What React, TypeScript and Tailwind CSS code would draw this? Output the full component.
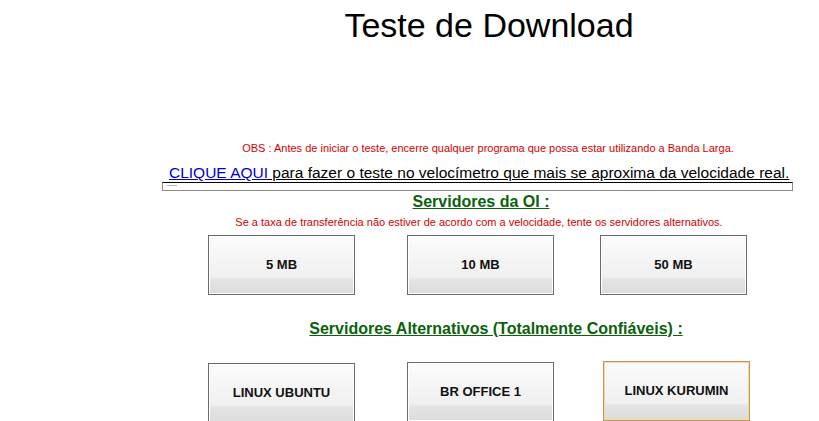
const Botao = ({ label, ativo }: { label: string; ativo?: boolean }) => (
  <button
    className={
      'relative flex h-[60px] w-[147px] items-center justify-center border bg-[linear-gradient(#fbfbfb,#f0f0f0_70%,#e3e3e3_76%,#dcdcdc)] text-[13px] font-bold text-[#111] ' +
      (ativo
        ? 'border-[#c8954f] shadow-[inset_0_0_0_1px_#f3d9a9]'
        : 'border-[#6b6b6b] shadow-[inset_0_0_0_1px_#ffffff]')
    }
  >
    {label}
  </button>
);

export default function App() {
  return (
    <div className="h-[421px] w-[819px] overflow-hidden bg-white font-['Liberation_Sans',Arial,sans-serif] text-black">
      <h1 className="pt-[6px] pl-[159px] text-center text-[34px] leading-[38px]">Teste de Download</h1>

      <div className="ml-[162px] mt-[98px] flex w-[631px] flex-col">
        <p className="pl-[21px] text-center text-[11px] leading-[13px] text-[#d40000]">
          OBS : Antes de iniciar o teste, encerre qualquer programa que possa estar utilizando a Banda Larga.
        </p>
        <p className="mt-[9px] whitespace-nowrap pl-[7px] text-[15.5px] leading-[18px] underline">
          <a className="text-[#0000cc]" href="#">CLIQUE AQUI</a> para fazer o teste no velocímetro que mais se aproxima da velocidade real.
        </p>
        <div className="h-[9px] w-[631px] border border-t-black border-[#8c8c8c] pl-[4px] pt-[2px]">
          <div className="h-px w-[10px] bg-[#b5b5b5]" />
        </div>

        <h2 className="mt-[1px] pl-[7px] text-center text-[16px] font-bold leading-[19px] text-[#0a620a] underline">
          Servidores da OI :
        </h2>
        <p className="mt-[5px] pl-[3px] text-center text-[11px] leading-[13px] text-[#d40000]">
          Se a taxa de transferência não estiver de acordo com a velocidade, tente os servidores alternativos.
        </p>

        <div className="mt-[6px] flex pl-[46px]">
          <Botao label="5 MB" />
          <div className="ml-[52px]">
            <Botao label="10 MB" />
          </div>
          <div className="ml-[46px]">
            <Botao label="50 MB" />
          </div>
        </div>

        <h2 className="mt-[24px] pl-[37px] text-center text-[16px] font-bold leading-[20px] text-[#0a620a] underline">
          Servidores Alternativos (Totalmente Confiáveis) :
        </h2>

        <div className="mt-[22px] flex items-start pl-[46px]">
          <div className="mt-[2px]">
            <Botao label="LINUX UBUNTU" />
          </div>
          <div className="ml-[52px] mt-[1px]">
            <Botao label="BR OFFICE 1" />
          </div>
          <div className="ml-[49px]">
            <Botao label="LINUX KURUMIN" ativo />
          </div>
        </div>
      </div>
    </div>
  );
}
